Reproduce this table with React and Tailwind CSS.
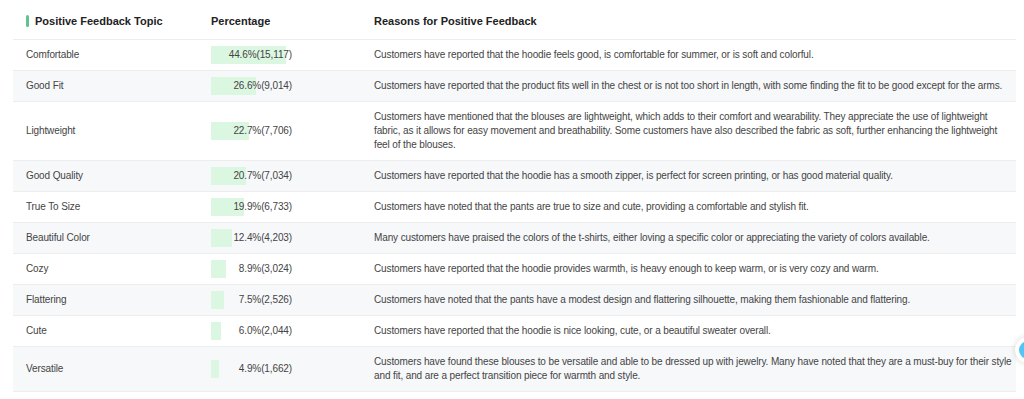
const rows = [
  { topic: 'Comfortable', pct: 44.6, count: '15,117', reason: 'Customers have reported that the hoodie feels good, is comfortable for summer, or is soft and colorful.' },
  { topic: 'Good Fit', pct: 26.6, count: '9,014', reason: 'Customers have reported that the product fits well in the chest or is not too short in length, with some finding the fit to be good except for the arms.' },
  { topic: 'Lightweight', pct: 22.7, count: '7,706', reason: 'Customers have mentioned that the blouses are lightweight, which adds to their comfort and wearability. They appreciate the use of lightweight fabric, as it allows for easy movement and breathability. Some customers have also described the fabric as soft, further enhancing the lightweight feel of the blouses.' },
  { topic: 'Good Quality', pct: 20.7, count: '7,034', reason: 'Customers have reported that the hoodie has a smooth zipper, is perfect for screen printing, or has good material quality.' },
  { topic: 'True To Size', pct: 19.9, count: '6,733', reason: 'Customers have noted that the pants are true to size and cute, providing a comfortable and stylish fit.' },
  { topic: 'Beautiful Color', pct: 12.4, count: '4,203', reason: 'Many customers have praised the colors of the t-shirts, either loving a specific color or appreciating the variety of colors available.' },
  { topic: 'Cozy', pct: 8.9, count: '3,024', reason: 'Customers have reported that the hoodie provides warmth, is heavy enough to keep warm, or is very cozy and warm.' },
  { topic: 'Flattering', pct: 7.5, count: '2,526', reason: 'Customers have noted that the pants have a modest design and flattering silhouette, making them fashionable and flattering.' },
  { topic: 'Cute', pct: 6.0, count: '2,044', reason: 'Customers have reported that the hoodie is nice looking, cute, or a beautiful sweater overall.' },
  { topic: 'Versatile', pct: 4.9, count: '1,662', reason: 'Customers have found these blouses to be versatile and able to be dressed up with jewelry. Many have noted that they are a must-buy for their style and fit, and are a perfect transition piece for warmth and style.' },
]

function Row({ row, index }) {
  const striped = index % 2 === 1
  return (
    <div className={`grid grid-cols-[187px_162px_1fr] items-center border-b border-[#ededed] text-[10px] leading-[14px] tracking-[-0.12px] text-[#444] ${striped ? 'bg-[#f7f8fa]' : 'bg-white'}`}>
      <div className="pl-[13px] py-2">{row.topic}</div>
      <div className="pl-[11px]">
        <div className="relative flex h-[18px] w-[81px] items-center justify-end">
          <div className="absolute left-0 top-0 h-[18px] bg-[#dcf7e1]" style={{ width: `${row.pct * 1.68}px` }} />
          <span className="relative">
            {row.pct.toFixed(1)}%({row.count})
          </span>
        </div>
      </div>
      <div className="pl-[12px] pr-[3px] py-2">{row.reason}</div>
    </div>
  )
}

export default function App() {
  return (
    <div className="relative h-[399px] w-[1024px] overflow-hidden bg-white font-['Liberation_Sans',Arial,sans-serif]">
      <div className="ml-[13px] w-[1003px]">
        <div className="grid h-[40px] grid-cols-[187px_162px_1fr] items-center border-b border-[#ededed] pt-[3px] text-[11px] font-bold text-[#222]">
          <div className="flex items-center pl-[13px]">
            <span className="mr-[6px] h-[12px] w-[3px] rounded-sm bg-[#5ec48a]" />
            Positive Feedback Topic
          </div>
          <div className="pl-[11px]">Percentage</div>
          <div className="pl-[12px]">Reasons for Positive Feedback</div>
        </div>
        {rows.map((row, i) => (
          <Row key={row.topic} row={row} index={i} />
        ))}
      </div>
      <div className="absolute left-[1015px] top-[337px] flex h-[26px] w-[26px] items-center justify-center rounded-full bg-white shadow-[0_0_6px_rgba(0,0,0,0.15)]">
        <div className="h-[18px] w-[18px] rounded-full bg-[#4fc6f5]" />
      </div>
    </div>
  )
}
